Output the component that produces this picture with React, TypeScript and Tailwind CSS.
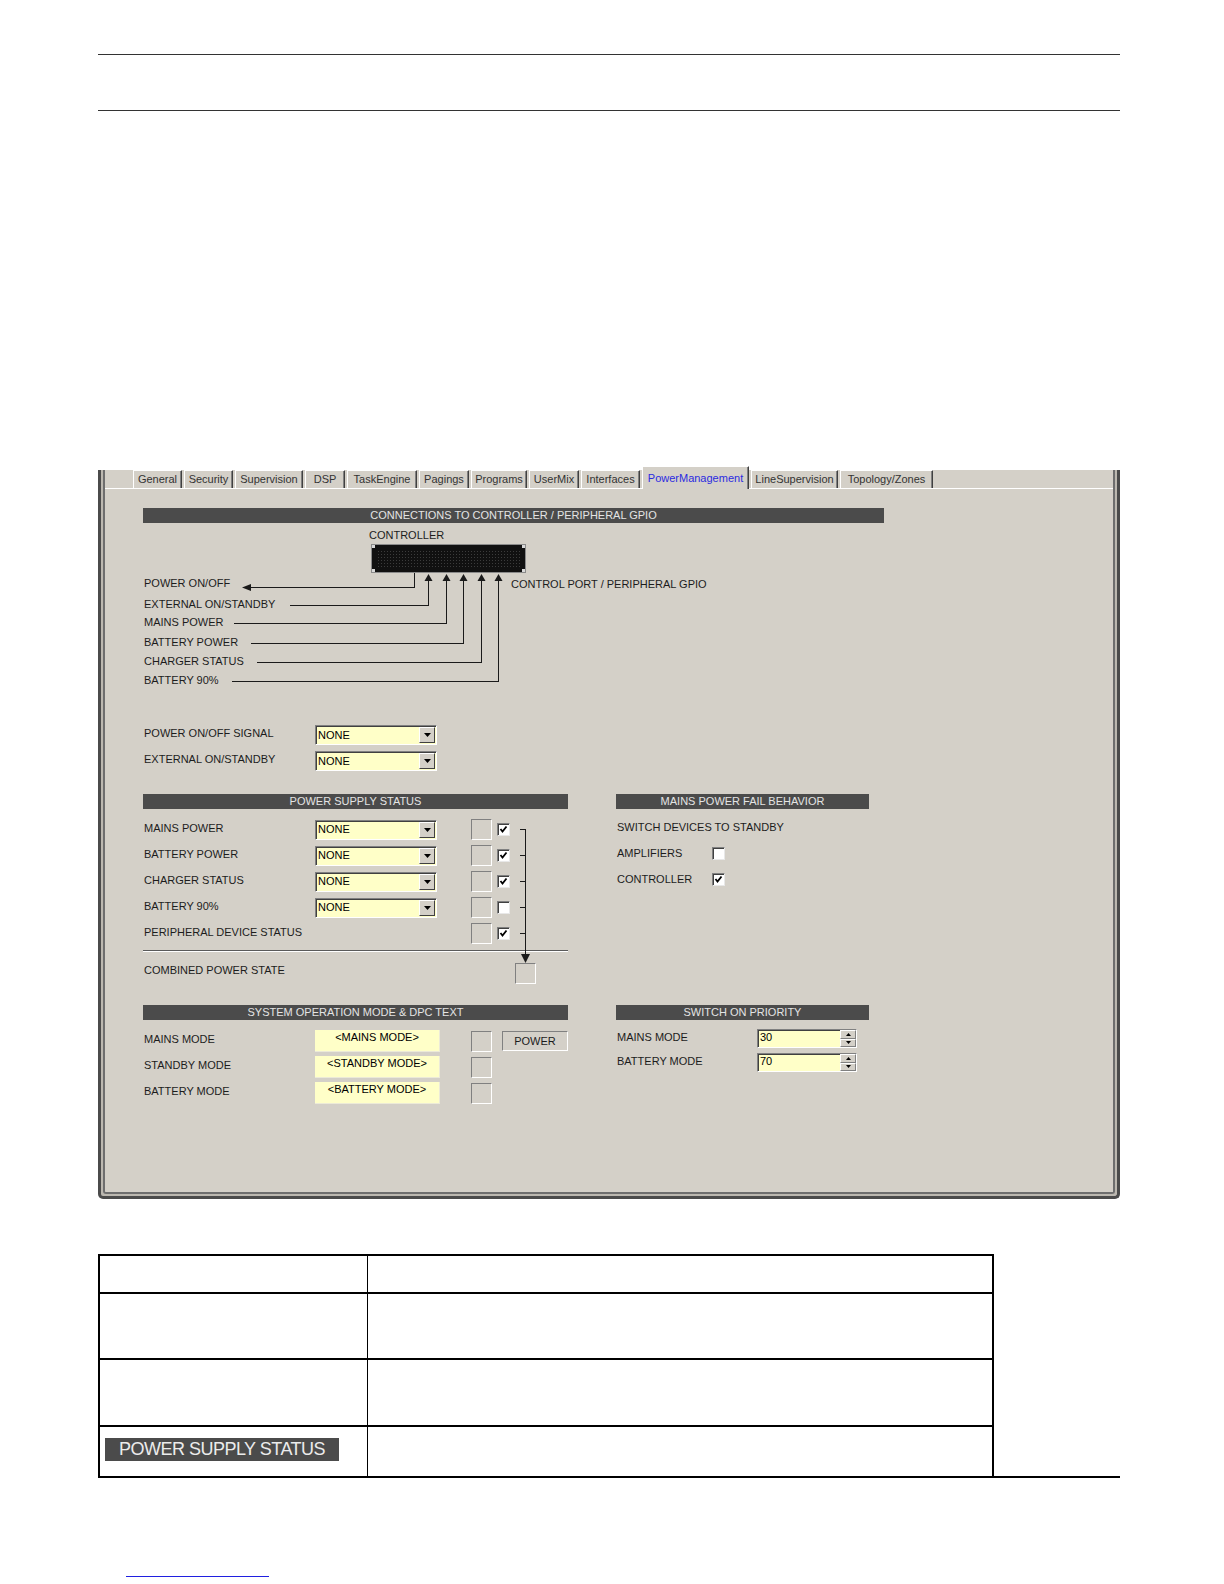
import React from 'react';

const tabs = [
  { name: 'General', w: 'w-[49px]' },
  { name: 'Security', w: 'w-[49px]' },
  { name: 'Supervision', w: 'w-[68px]' },
  { name: 'DSP', w: 'w-[40px]' },
  { name: 'TaskEngine', w: 'w-[70px]' },
  { name: 'Pagings', w: 'w-[50px]' },
  { name: 'Programs', w: 'w-[56px]' },
  { name: 'UserMix', w: 'w-[50px]' },
  { name: 'Interfaces', w: 'w-[59px]' },
  { name: 'PowerManagement', w: 'w-[107px]', active: true },
  { name: 'LineSupervision', w: 'w-[87px]' },
  { name: 'Topology/Zones', w: 'w-[93px]' },
];

const Header = ({ title, className }: { title: string; className: string }) => (
  <div
    className={`h-[15px] bg-[#4b4b4b] text-[#e4e4e4] text-[11px] leading-[15px] text-center ${className}`}
  >
    {title}
  </div>
);

const Combo = () => (
  <div className="w-[122px] h-[20px] flex items-center border border-t-[#808080] border-l-[#808080] border-b-white border-r-white shadow-[inset_1px_1px_0_#404040] bg-[#ffffc8]">
    <span className="flex-1 pl-[2px] text-[11px] leading-none text-black">NONE</span>
    <div className="w-[16px] h-[16px] mr-[1px] flex items-center justify-center bg-[#d4d0c8] border border-t-white border-l-white border-b-[#404040] border-r-[#404040]">
      <svg width="7" height="4" viewBox="0 0 7 4">
        <polygon points="0,0 7,0 3.5,4" fill="#000" />
      </svg>
    </div>
  </div>
);

const Led = () => (
  <div className="w-[21px] h-[21px] border border-t-[#808080] border-l-[#808080] border-b-white border-r-white bg-[#d4d0c8]" />
);

const Check = ({ checked }: { checked?: boolean }) => (
  <div className="w-[13px] h-[13px] flex items-center justify-center bg-white border border-t-[#808080] border-l-[#808080] border-b-[#e8e8e8] border-r-[#e8e8e8] shadow-[inset_1px_1px_0_#404040]">
    {checked && (
      <svg width="9" height="9" viewBox="0 0 9 9">
        <polyline points="1.5,4 3.5,6.5 7.5,1.5" fill="none" stroke="#000" strokeWidth="1.8" />
      </svg>
    )}
  </div>
);

const Spin = ({ value }: { value: string }) => (
  <div className="w-[100px] h-[19px] flex border border-t-[#808080] border-l-[#808080] border-b-white border-r-white shadow-[inset_1px_1px_0_#404040] bg-[#ffffc8]">
    <span className="flex-1 pl-[2px] text-[11px] leading-[15px] text-black">{value}</span>
    <div className="w-[16px] flex flex-col">
      <div className="flex-1 flex items-center justify-center bg-[#d4d0c8] border border-t-white border-l-white border-b-[#808080] border-r-[#808080]">
        <svg width="5" height="3" viewBox="0 0 5 3">
          <polygon points="0,3 5,3 2.5,0" fill="#000" />
        </svg>
      </div>
      <div className="flex-1 flex items-center justify-center bg-[#d4d0c8] border border-t-white border-l-white border-b-[#808080] border-r-[#808080]">
        <svg width="5" height="3" viewBox="0 0 5 3">
          <polygon points="0,0 5,0 2.5,3" fill="#000" />
        </svg>
      </div>
    </div>
  </div>
);

const ControllerBox = () => (
  <svg width="155" height="29" viewBox="0 0 155 29" className="absolute left-[228px] top-[21px]">
    <defs>
      <pattern id="dots" width="3" height="3" patternUnits="userSpaceOnUse">
        <rect x="1" y="1" width="1" height="1" fill="#3c3c3c" />
      </pattern>
    </defs>
    <rect x="0.5" y="0.5" width="154" height="28" fill="#111" stroke="#8a8a8a" />
    <rect x="6" y="5" width="143" height="19" fill="url(#dots)" />
    <rect x="1" y="1" width="3" height="3" fill="#d8d8d8" />
    <rect x="151" y="1" width="3" height="3" fill="#d8d8d8" />
    <rect x="1" y="25" width="3" height="3" fill="#d8d8d8" />
    <rect x="151" y="25" width="3" height="3" fill="#d8d8d8" />
  </svg>
);

const gpio = [
  { label: 'EXTERNAL ON/STANDBY', top: 'top-[74px]', x: 285, y: 82, from: 147 },
  { label: 'MAINS POWER', top: 'top-[92px]', x: 303, y: 100, from: 91 },
  { label: 'BATTERY POWER', top: 'top-[112px]', x: 320, y: 120, from: 108 },
  { label: 'CHARGER STATUS', top: 'top-[131px]', x: 338, y: 139, from: 114 },
  { label: 'BATTERY 90%', top: 'top-[150px]', x: 355, y: 158, from: 89 },
];

const Diagram = () => (
  <div className="relative w-[741px] h-[203px]">
    <span className="absolute left-[226px] top-[5px] text-[11px] leading-[14px]">CONTROLLER</span>
    <ControllerBox />
    <svg width="741" height="203" className="absolute left-0 top-0" shapeRendering="crispEdges">
      <polyline points="271.5,50 271.5,64.5 106,64.5" fill="none" stroke="#1a1a1a" />
      <polygon points="99,64.5 108,61 108,68" fill="#1a1a1a" shapeRendering="auto" />
      {gpio.map((g) => (
        <g key={g.label}>
          <polyline
            points={`${g.from},${g.y + 0.5} ${g.x + 0.5},${g.y + 0.5} ${g.x + 0.5},57`}
            fill="none"
            stroke="#1a1a1a"
          />
          <polygon
            points={`${g.x + 0.5},51 ${g.x - 3.5},58 ${g.x + 4.5},58`}
            fill="#1a1a1a"
            shapeRendering="auto"
          />
        </g>
      ))}
    </svg>
    <span className="absolute left-[1px] top-[53px] text-[11px] leading-[14px]">POWER ON/OFF</span>
    {gpio.map((g) => (
      <span key={g.label} className={`absolute left-[1px] ${g.top} text-[11px] leading-[14px]`}>
        {g.label}
      </span>
    ))}
    <span className="absolute left-[368px] top-[54px] text-[11px] leading-[14px]">
      CONTROL PORT / PERIPHERAL GPIO
    </span>
  </div>
);

// labels sit a little above the middle of their row, as in the original dialog
const Label = ({ children, w }: { children: React.ReactNode; w: string }) => (
  <span className={`${w} pl-[1px] pb-[4px] text-[11px] leading-[14px] shrink-0`}>{children}</span>
);

const supplyRows = [
  { label: 'MAINS POWER', combo: true, checked: true },
  { label: 'BATTERY POWER', combo: true, checked: true },
  { label: 'CHARGER STATUS', combo: true, checked: true },
  { label: 'BATTERY 90%', combo: true, checked: false },
  { label: 'PERIPHERAL DEVICE STATUS', combo: false, checked: true },
];

const modes = ['MAINS MODE', 'STANDBY MODE', 'BATTERY MODE'];

const Panel = () => (
  <div className="flex-1 pl-[38px] flex flex-col text-[#1c1c1c]">
    <Header title="CONNECTIONS TO CONTROLLER / PERIPHERAL GPIO" className="mt-[19px] w-[741px] h-[14px] leading-[14px]" />
    <Diagram />

    <div className="flex flex-col gap-[6px] -mt-[1px]">
      {['POWER ON/OFF SIGNAL', 'EXTERNAL ON/STANDBY'].map((l) => (
        <div key={l} className="flex items-center h-[20px]">
          <Label w="w-[172px]">{l}</Label>
          <Combo />
        </div>
      ))}
    </div>

    <div className="flex gap-[48px] mt-[23px]">
      <div className="relative w-[425px] flex flex-col">
        <Header title="POWER SUPPLY STATUS" className="w-[425px]" />
        <div className="flex flex-col gap-[5px] mt-[10px]">
          {supplyRows.map((r) => (
            <div key={r.label} className="flex items-center h-[21px]">
              <Label w="w-[172px]">{r.label}</Label>
              {r.combo ? <Combo /> : <div className="w-[122px]" />}
              <div className="ml-[34px]">
                <Led />
              </div>
              <div className="ml-[5px]">
                <Check checked={r.checked} />
              </div>
            </div>
          ))}
        </div>
        <div className="mt-[6px] h-[2px] border-t border-t-[#5a5a5a] border-b border-b-white" />
        <div className="flex items-start h-[22px] mt-[11px]">
          <span className="w-[372px] pl-[1px] text-[11px] leading-[14px] shrink-0">COMBINED POWER STATE</span>
          <Led />
        </div>
        <svg width="425" height="192" className="absolute left-0 top-0" shapeRendering="crispEdges">
          <polyline points="377,35.5 382.5,35.5 382.5,162" fill="none" stroke="#1a1a1a" />
          {[61, 87, 113, 139].map((y) => (
            <line key={y} x1="377" y1={y + 0.5} x2="382" y2={y + 0.5} stroke="#1a1a1a" />
          ))}
          <polygon points="382.5,169 378,160 387,160" fill="#1a1a1a" shapeRendering="auto" />
        </svg>
      </div>

      <div className="w-[253px] flex flex-col">
        <Header title="MAINS POWER FAIL BEHAVIOR" className="w-[253px]" />
        <div className="flex flex-col gap-[10px] mt-[10px]">
          <div className="flex items-center h-[16px]">
            <span className="pl-[1px] text-[11px] leading-[14px]">SWITCH DEVICES TO STANDBY</span>
          </div>
          <div className="flex items-center h-[16px]">
            <span className="w-[96px] pl-[1px] text-[11px] leading-[14px]">AMPLIFIERS</span>
            <Check />
          </div>
          <div className="flex items-center h-[16px]">
            <span className="w-[96px] pl-[1px] text-[11px] leading-[14px]">CONTROLLER</span>
            <Check checked />
          </div>
        </div>
      </div>
    </div>

    <div className="flex gap-[48px] mt-[20px]">
      <div className="w-[425px] flex flex-col">
        <Header title="SYSTEM OPERATION MODE & DPC TEXT" className="w-[425px]" />
        <div className="flex flex-col gap-[4px] mt-[10px]">
          {modes.map((m, i) => (
            <div key={m} className="flex items-center h-[22px]">
              <Label w="w-[172px]">{m}</Label>
              <div className="w-[125px] h-[22px] bg-[#ffffc8] border-b border-r border-[#ecead8] text-center text-[11px] leading-[15px] text-black">
                {`<${m}>`}
              </div>
              <div className="ml-[31px]">
                <Led />
              </div>
              {i === 0 && (
                <div className="ml-[10px] w-[66px] h-[20px] flex items-center justify-center border border-t-[#808080] border-l-[#808080] border-b-white border-r-white text-[11px]">
                  POWER
                </div>
              )}
            </div>
          ))}
        </div>
      </div>

      <div className="w-[253px] flex flex-col">
        <Header title="SWITCH ON PRIORITY" className="w-[253px]" />
        <div className="flex flex-col gap-[5px] mt-[9px]">
          <div className="flex items-center h-[19px]">
            <Label w="w-[141px]">MAINS MODE</Label>
            <Spin value="30" />
          </div>
          <div className="flex items-center h-[19px]">
            <Label w="w-[141px]">BATTERY MODE</Label>
            <Spin value="70" />
          </div>
        </div>
      </div>
    </div>
  </div>
);

const Window = () => (
  <div className="w-[1022px] h-[729px] flex border-x-[3px] border-b-[3px] border-[#4b4b4b] rounded-b-[5px] bg-[#bcb8b0] px-[2px] pb-[2px]">
    <div className="flex-1 flex flex-col bg-[#d4d0c8] border-x-2 border-b-2 border-[#6e6e6e] rounded-b-[3px]">
      <div className="h-[19px] flex items-end pl-[28px] gap-[2px] border-b border-white shrink-0">
        {tabs.map((t) =>
          t.active ? (
            <div
              key={t.name}
              className={`${t.w} h-[23px] -mb-px flex items-center justify-center bg-[#d4d0c8] border-t border-l border-white border-r border-r-[#404040] shadow-[inset_-1px_0_0_#808080] text-[11px] text-[#2b2be0]`}
            >
              {t.name}
            </div>
          ) : (
            <div
              key={t.name}
              className={`${t.w} h-[18px] flex items-center justify-center border-t border-l border-white border-r border-r-[#404040] shadow-[inset_-1px_0_0_#808080] text-[11px] text-[#333333]`}
            >
              {t.name}
            </div>
          ),
        )}
      </div>
      <Panel />
    </div>
  </div>
);

const rows = ['h-[38px]', 'h-[66px]', 'h-[67px]'];

const Table = () => (
  <div className="w-[896px] border-x-2 border-t-2 border-black">
    {rows.map((h) => (
      <div key={h} className={`${h} flex border-b-2 border-black`}>
        <div className="w-[268px] border-r border-black" />
        <div className="flex-1" />
      </div>
    ))}
    <div className="h-[49px] flex">
      <div className="w-[268px] border-r border-black pl-[5px] pt-[11px]">
        <div className="w-[234px] h-[23px] bg-[#4b4b4b] text-[#ececec] text-[18px] leading-[23px] text-center tracking-[-0.5px]">
          POWER SUPPLY STATUS
        </div>
      </div>
      <div className="flex-1" />
    </div>
  </div>
);

export default function App() {
  return (
    <div className="w-[1224px] h-[1584px] bg-white font-['Liberation_Sans',Arial,sans-serif] overflow-hidden">
      <div className="pl-[98px] pt-[54px] flex flex-col">
        <div className="w-[1022px] h-px bg-[#333]" />
        <div className="h-[55px]" />
        <div className="w-[1022px] h-px bg-[#333]" />
        <div className="h-[359px]" />
        <Window />
        <div className="h-[55px]" />
        <Table />
        <div className="w-[1022px] h-[2px] bg-black" />
        <div className="h-[98px]" />
        <div className="ml-[28px] w-[143px] h-px bg-[#2020e0]" />
      </div>
    </div>
  );
}
